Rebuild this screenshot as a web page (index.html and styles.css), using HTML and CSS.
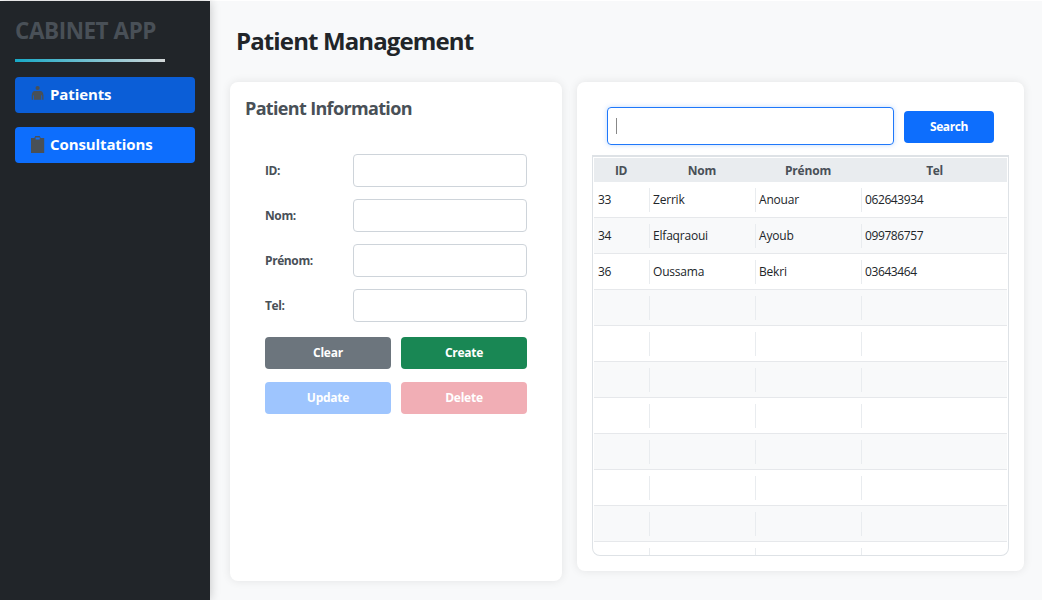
FILE: index.html
```html
<!DOCTYPE html>
<html lang="fr">
<head>
<meta charset="utf-8">
<title>Cabinet App</title>
<link rel="stylesheet" href="styles.css">
</head>
<body>
<div class="app">
  <aside class="sidebar">
    <div class="brand">CABINET APP</div>
    <div class="brand-line"></div>
    <nav class="nav">
      <button class="nav-item active">
        <svg class="nav-icon" width="16" height="20" viewBox="0 0 16 20"><circle cx="7.600" cy="4" r="2.100"/><path d="M5 7h5.200C12.400 7 13.300 9 13.500 11.500V15.700H12.100V12L11.200 10.500V15.700H4V10.500L3.100 12V15.700H1.700V11.500C1.900 9 2.800 7 5 7z"/></svg>
        <span>Patients</span>
      </button>
      <button class="nav-item">
        <svg class="nav-icon" width="16" height="20" viewBox="0 0 16 20"><path fill-rule="evenodd" d="M1 3H4.300L5.300 1H9.700L10.700 3H14.200V18H1zM5.600 2.400V4.400H9.700V2.400z"/></svg>
        <span>Consultations</span>
      </button>
    </nav>
  </aside>
  <main class="main">
    <h1 class="page-title">Patient Management</h1>
    <div class="panels">
      <section class="card form-card">
        <h2 class="card-title">Patient Information</h2>
        <div class="form">
          <label class="field"><span class="label">ID:</span><input class="input"></label>
          <label class="field"><span class="label">Nom:</span><input class="input"></label>
          <label class="field"><span class="label">Prénom:</span><input class="input"></label>
          <label class="field"><span class="label">Tel:</span><input class="input"></label>
        </div>
        <div class="actions">
          <button class="btn clear">Clear</button>
          <button class="btn create">Create</button>
          <button class="btn update">Update</button>
          <button class="btn delete">Delete</button>
        </div>
      </section>
      <section class="card list-card">
        <div class="search">
          <div class="search-input"><span class="caret"></span></div>
          <button class="btn search-btn">Search</button>
        </div>
        <div class="table">
          <div class="row head"><span>ID</span><span>Nom</span><span>Prénom</span><span>Tel</span></div>
          <div class="row"><span>33</span><span>Zerrik</span><span>Anouar</span><span>062643934</span></div>
          <div class="row"><span>34</span><span>Elfaqraoui</span><span>Ayoub</span><span>099786757</span></div>
          <div class="row"><span>36</span><span>Oussama</span><span>Bekri</span><span>03643464</span></div>
          <div class="row"><span></span><span></span><span></span><span></span></div>
          <div class="row"><span></span><span></span><span></span><span></span></div>
          <div class="row"><span></span><span></span><span></span><span></span></div>
          <div class="row"><span></span><span></span><span></span><span></span></div>
          <div class="row"><span></span><span></span><span></span><span></span></div>
          <div class="row"><span></span><span></span><span></span><span></span></div>
          <div class="row"><span></span><span></span><span></span><span></span></div>
          <div class="row"><span></span><span></span><span></span><span></span></div>
        </div>
      </section>
    </div>
  </main>
</div>
</body>
</html>
```
FILE: styles.css
```css
* { box-sizing: border-box; }
body {
  margin: 0;
  background: #fff;
  font: 12px/16px "Open Sans", "Noto Sans", sans-serif;
  color: #212529;
}
button { border: 0; padding: 0; font: inherit; }
.app { display: flex; height: 600px; padding-top: 1px; overflow: hidden; }

.sidebar {
  z-index: 1;
  width: 210px;
  padding: 14px 15px;
  background: #212529;
  box-shadow: 0 0 10px rgba(0, 0, 0, .22);
}
.brand {
  height: 32px;
  font-size: 22.5px;
  line-height: 32px;
  font-weight: 700;
  letter-spacing: -.45px;
  color: #495057;
  white-space: nowrap;
}
.brand-line { width: 150px; height: 3px; margin-top: 12px; background: linear-gradient(90deg, #17a9c6, #d3d7d8); }
.nav { display: grid; gap: 14px; margin-top: 15px; }
.nav-item {
  display: flex;
  align-items: center;
  height: 36px;
  padding-left: 15px;
  border-radius: 4px;
  background: #0d6efd;
  color: #fff;
  font-size: 15px;
  font-weight: 700;
  letter-spacing: -.1px;
}
.nav-item span { padding-bottom: 2px; }
.nav-item.active { background: #0b5ed7; }
.nav-icon { margin: -2px 4px 0 0; fill: #495057; }
.nav-item:last-child .nav-icon { margin-top: 0; }

.main { flex: 1; padding: 23px 18px 0 20px; background: #f8f9fa; }
.page-title {
  margin: 0 0 0 6px;
  height: 34px;
  font-size: 24px;
  line-height: 34px;
  letter-spacing: -.87px;
  white-space: nowrap;
}
.panels { display: flex; align-items: flex-start; gap: 15px; margin-top: 24px; }
.card { border-radius: 8px; background: #fff; box-shadow: 0 0 10px rgba(0, 0, 0, .09); }
.form-card { width: 332px; height: 499px; padding: 13px 35px 0; }
.card-title {
  margin: 0 0 0 -20px;
  height: 26px;
  font-size: 18px;
  line-height: 26px;
  letter-spacing: -.66px;
  color: #495057;
  white-space: nowrap;
}
.form { display: grid; gap: 12px; margin-top: 33px; }
.field { display: flex; align-items: center; height: 33px; }
.label { width: 88px; font-weight: 700; letter-spacing: -.4px; color: #495057; }
.input { width: 174px; height: 33px; border: 1px solid #ced4da; border-radius: 4px; background: #fff; }
.actions { display: grid; grid-template-columns: 126px 126px; gap: 13px 10px; margin-top: 15px; }
.btn { height: 32px; border-radius: 4px; color: #fff; font-weight: 700; letter-spacing: -.25px; }
.clear { background: #6c757d; }
.create { background: #198754; }
.update { background: #9ec5fe; }
.delete { background: #f1aeb5; }

.list-card { width: 447px; height: 489px; padding: 25px 15px 0; }
.search { display: flex; align-items: center; gap: 10px; height: 38px; padding: 0 15px; }
.search-input {
  display: flex;
  align-items: center;
  width: 287px;
  height: 38px;
  padding-left: 8px;
  border: 1px solid #1f78fa;
  border-radius: 4px;
  box-shadow: 0 0 5px rgba(13, 110, 253, .25);
}
.caret { width: 1px; height: 16px; background: #888; }
.search-btn { width: 90px; margin-top: 2px; background: #0d6efd; letter-spacing: -.4px; }

.table {
  width: 417px;
  height: 401px;
  margin-top: 10px;
  padding: 1px 1px 0;
  border: 1px solid #dee2e6;
  border-top-width: 2px;
  border-radius: 0 0 8px 8px;
  overflow: hidden;
}
.row {
  display: grid;
  grid-template-columns: 56px 106px 106px 1fr;
  align-items: center;
  height: 36px;
  border-bottom: 1px solid #e6e8eb;
}
.row span {
  height: 24px;
  padding-left: 3px;
  line-height: 24px;
  letter-spacing: -.4px;
  border-right: 1px solid #e9ecef;
}
.row span:first-child { padding-left: 4px; }
.row span:nth-child(2) { letter-spacing: -.4px; }
.row span:nth-child(2), .row span:nth-child(3) { letter-spacing: -.2px; }
.row span:last-child { border-right: 0; }
.row:nth-child(odd) { background: #f8f9fa; }
.row.head { height: 24px; border: 0; background: #e9ecef; color: #495057; font-weight: 700; text-align: center; }
.row.head span { padding: 0 2px 0 0; border: 0; line-height: 26px; }
.row.head span:last-child { padding: 0; }
```
